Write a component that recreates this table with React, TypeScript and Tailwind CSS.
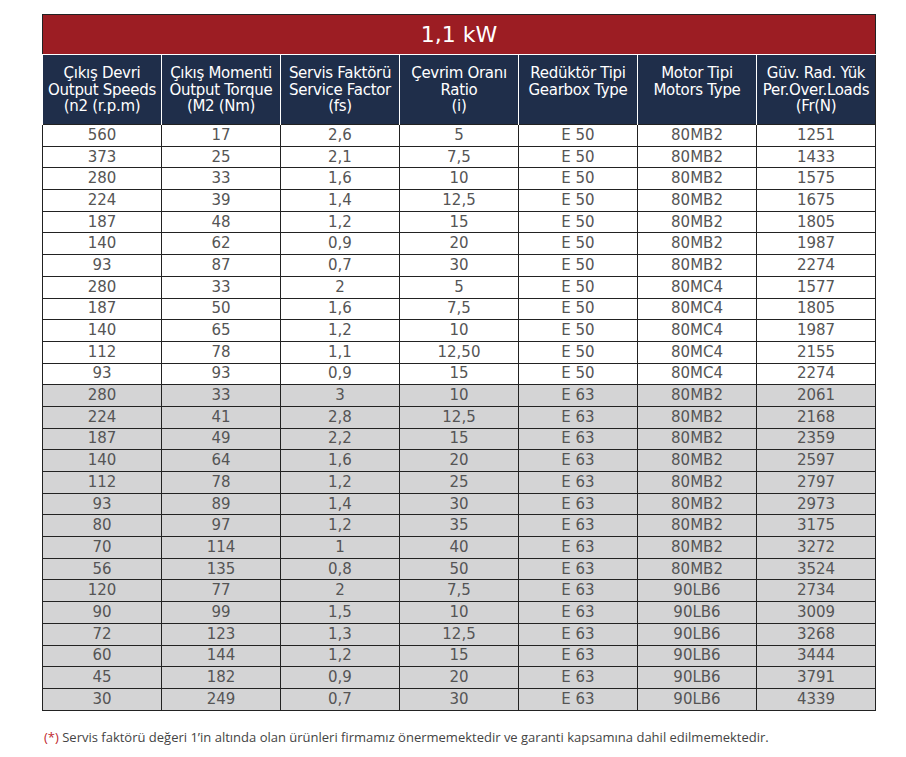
import React from "react";

const rows: string[][] = [
  ["560", "17", "2,6", "5", "E 50", "80MB2", "1251"],
  ["373", "25", "2,1", "7,5", "E 50", "80MB2", "1433"],
  ["280", "33", "1,6", "10", "E 50", "80MB2", "1575"],
  ["224", "39", "1,4", "12,5", "E 50", "80MB2", "1675"],
  ["187", "48", "1,2", "15", "E 50", "80MB2", "1805"],
  ["140", "62", "0,9", "20", "E 50", "80MB2", "1987"],
  ["93", "87", "0,7", "30", "E 50", "80MB2", "2274"],
  ["280", "33", "2", "5", "E 50", "80MC4", "1577"],
  ["187", "50", "1,6", "7,5", "E 50", "80MC4", "1805"],
  ["140", "65", "1,2", "10", "E 50", "80MC4", "1987"],
  ["112", "78", "1,1", "12,50", "E 50", "80MC4", "2155"],
  ["93", "93", "0,9", "15", "E 50", "80MC4", "2274"],
  ["280", "33", "3", "10", "E 63", "80MB2", "2061"],
  ["224", "41", "2,8", "12,5", "E 63", "80MB2", "2168"],
  ["187", "49", "2,2", "15", "E 63", "80MB2", "2359"],
  ["140", "64", "1,6", "20", "E 63", "80MB2", "2597"],
  ["112", "78", "1,2", "25", "E 63", "80MB2", "2797"],
  ["93", "89", "1,4", "30", "E 63", "80MB2", "2973"],
  ["80", "97", "1,2", "35", "E 63", "80MB2", "3175"],
  ["70", "114", "1", "40", "E 63", "80MB2", "3272"],
  ["56", "135", "0,8", "50", "E 63", "80MB2", "3524"],
  ["120", "77", "2", "7,5", "E 63", "90LB6", "2734"],
  ["90", "99", "1,5", "10", "E 63", "90LB6", "3009"],
  ["72", "123", "1,3", "12,5", "E 63", "90LB6", "3268"],
  ["60", "144", "1,2", "15", "E 63", "90LB6", "3444"],
  ["45", "182", "0,9", "20", "E 63", "90LB6", "3791"],
  ["30", "249", "0,7", "30", "E 63", "90LB6", "4339"],
];

const headers: string[][] = [
  ["Çıkış Devri", "Output Speeds", "(n2 (r.p.m)"],
  ["Çıkış Momenti", "Output Torque", "(M2 (Nm)"],
  ["Servis Faktörü", "Service Factor", "(fs)"],
  ["Çevrim Oranı", "Ratio", "(i)"],
  ["Redüktör Tipi", "Gearbox Type"],
  ["Motor Tipi", "Motors Type"],
  ["Güv. Rad. Yük", "Per.Over.Loads", "(Fr(N)"],
];

export default function App() {
  return (
    <div className="w-[906px] h-[757px] bg-white" style={{ fontFamily: "'DejaVu Sans', 'Noto Sans', sans-serif" }}>
      <div className="pt-[14px] pl-[42px]">
        <table className="w-[834px] border-collapse table-fixed">
          <thead>
            <tr>
              <th colSpan={7} className="h-[40px] bg-[#9c1d23] border border-[#222] border-b-white text-white font-normal text-[22px] leading-none">
                1,1 kW
              </th>
            </tr>
            <tr>
              {headers.map((h, i) => (
                <th
                  key={i}
                  className={`h-[70px] bg-[#1f2e4a] text-white font-normal text-[15px] leading-[16.5px] tracking-[-0.3px] align-top pt-[10px] border-l border-l-white ${i === 0 ? "border-l-[#222]" : ""} ${i === 6 ? "border-r border-r-[#222]" : ""}`}
                >
                  {h.map((l, j) => (
                    <div key={j} className="whitespace-nowrap">{l}</div>
                  ))}
                </th>
              ))}
            </tr>
          </thead>
          <tbody>
            {rows.map((r, i) => (
              <tr key={i} className={i >= 12 ? "bg-[#d4d4d5]" : "bg-white"}>
                {r.map((c, j) => (
                  <td
                    key={j}
                    className="h-[21.7px] border border-[#222] text-center text-[15px] leading-none text-[#555] p-0"
                  >
                    {c}
                  </td>
                ))}
              </tr>
            ))}
          </tbody>
        </table>
        <div className="mt-[17px] ml-[2px] text-[13px] text-[#444]" style={{ fontFamily: "'Open Sans', 'Liberation Sans', sans-serif" }}>
          <span className="text-[#c0272d]">(*)</span> Servis faktörü değeri 1’in altında olan ürünleri firmamız önermemektedir ve garanti kapsamına dahil edilmemektedir.
        </div>
      </div>
    </div>
  );
}
